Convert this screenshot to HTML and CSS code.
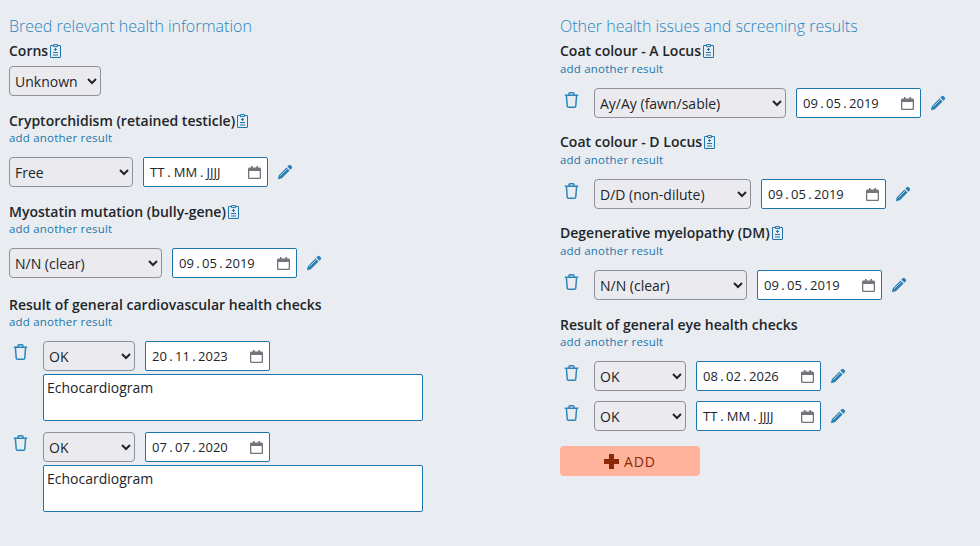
FILE: index.html
```html
<!DOCTYPE html>
<html lang="en">
<head>
<meta charset="utf-8">
<title>Health information</title>
<link rel="stylesheet" href="styles.css">
</head>
<body>
<svg class="defs" width="0" height="0" aria-hidden="true">
  <symbol id="clip" viewBox="0 0 11 14"><path d="M3.500 1.500H.9a.4.4 0 0 0-.4.4v11.200c0 .2.200.4.400.4h9.200c.2 0 .4-.2.4-.4V1.900a.4.4 0 0 0-.4-.4H7.500M3.500.6h4v2h-4zM5.500 4v3M4 5.500h3M3 8.500h5M3 11h5" fill="none" stroke="currentColor" stroke-width="1"/></symbol>
  <symbol id="cal" viewBox="0 0 13 13"><path d="M3 0h1.600v1.500h3.800V0H10v1.500h1.400c.9 0 1.600.7 1.600 1.600v8.300c0 .9-.7 1.600-1.600 1.600H1.600C.7 13 0 12.300 0 11.400V3.100C0 2.200.7 1.500 1.600 1.500H3zM1.300 5v6.400c0 .2.100.3.300.3h9.800c.2 0 .3-.1.300-.3V5z" fill="currentColor"/></symbol>
  <symbol id="pen" viewBox="0 0 16 16"><path d="M11.600 1.300a1.500 1.500 0 0 1 2.100 0l1 1a1.500 1.500 0 0 1 0 2.100l-1.300 1.300-3.100-3.100zM9.500 3.400l3.100 3.100-7.800 7.800-3.900.9.900-4z" fill="currentColor"/><path d="M3.200 11.800l7.300-7.300" stroke="#e9edf1" stroke-width=".7"/></symbol>
  <symbol id="bin" viewBox="0 0 14 15"><path d="M.7 3.100h12.600M4.700 3V1.600c0-.5.400-.9.900-.9h2.800c.5 0 .9.400.9.900V3M2.200 3.100l.8 10c0 .7.500 1.200 1.200 1.200h5.600c.7 0 1.200-.5 1.200-1.200l.8-10" fill="none" stroke="currentColor" stroke-width="1.400"/></symbol>
</svg>
<main class="page">
  <section class="col col-left">
    <h2 class="heading">Breed relevant health information</h2>
    <div class="group">
      <h3 class="label">Corns<svg class="clip"><use href="#clip"/></svg></h3>
      <div class="row row-first">
        <select class="sel w-92"><option>Unknown</option></select>
      </div>
    </div>
    <div class="group">
      <h3 class="label">Cryptorchidism (retained testicle)<svg class="clip"><use href="#clip"/></svg></h3>
      <a class="link" href="#">add another result</a>
      <div class="row">
        <select class="sel w-124"><option>Free</option></select>
        <div class="date empty"><span>TT . MM . JJJJ</span><svg class="cal"><use href="#cal"/></svg></div>
        <svg class="pen"><use href="#pen"/></svg>
      </div>
    </div>
    <div class="group">
      <h3 class="label">Myostatin mutation (bully-gene)<svg class="clip"><use href="#clip"/></svg></h3>
      <a class="link" href="#">add another result</a>
      <div class="row">
        <select class="sel w-153"><option>N/N (clear)</option></select>
        <div class="date"><span>09 . 05 . 2019</span><svg class="cal"><use href="#cal"/></svg></div>
        <svg class="pen"><use href="#pen"/></svg>
      </div>
    </div>
    <div class="group group-wide">
      <h3 class="label">Result of general cardiovascular health checks</h3>
      <a class="link" href="#">add another result</a>
      <div class="entry">
        <svg class="bin"><use href="#bin"/></svg>
        <div class="entry-body">
          <div class="row-tight">
            <select class="sel w-92"><option>OK</option></select>
            <div class="date"><span>20 . 11 . 2023</span><svg class="cal"><use href="#cal"/></svg></div>
          </div>
          <textarea class="note">Echocardiogram</textarea>
        </div>
      </div>
      <div class="entry">
        <svg class="bin"><use href="#bin"/></svg>
        <div class="entry-body">
          <div class="row-tight">
            <select class="sel w-92"><option>OK</option></select>
            <div class="date"><span>07 . 07 . 2020</span><svg class="cal"><use href="#cal"/></svg></div>
          </div>
          <textarea class="note">Echocardiogram</textarea>
        </div>
      </div>
    </div>
  </section>
  <section class="col">
    <h2 class="heading">Other health issues and screening results</h2>
    <div class="group">
      <h3 class="label">Coat colour - A Locus<svg class="clip"><use href="#clip"/></svg></h3>
      <a class="link" href="#">add another result</a>
      <div class="row">
        <svg class="bin"><use href="#bin"/></svg>
        <select class="sel w-192"><option>Ay/Ay (fawn/sable)</option></select>
        <div class="date"><span>09 . 05 . 2019</span><svg class="cal"><use href="#cal"/></svg></div>
        <svg class="pen"><use href="#pen"/></svg>
      </div>
    </div>
    <div class="group">
      <h3 class="label">Coat colour - D Locus<svg class="clip"><use href="#clip"/></svg></h3>
      <a class="link" href="#">add another result</a>
      <div class="row">
        <svg class="bin"><use href="#bin"/></svg>
        <select class="sel w-157"><option>D/D (non-dilute)</option></select>
        <div class="date"><span>09 . 05 . 2019</span><svg class="cal"><use href="#cal"/></svg></div>
        <svg class="pen"><use href="#pen"/></svg>
      </div>
    </div>
    <div class="group">
      <h3 class="label">Degenerative myelopathy (DM)<svg class="clip"><use href="#clip"/></svg></h3>
      <a class="link" href="#">add another result</a>
      <div class="row">
        <svg class="bin"><use href="#bin"/></svg>
        <select class="sel w-153"><option>N/N (clear)</option></select>
        <div class="date"><span>09 . 05 . 2019</span><svg class="cal"><use href="#cal"/></svg></div>
        <svg class="pen"><use href="#pen"/></svg>
      </div>
    </div>
    <div class="group group-last">
      <h3 class="label">Result of general eye health checks</h3>
      <a class="link link-tight" href="#">add another result</a>
      <div class="row">
        <svg class="bin"><use href="#bin"/></svg>
        <select class="sel w-92"><option>OK</option></select>
        <div class="date"><span>08 . 02 . 2026</span><svg class="cal"><use href="#cal"/></svg></div>
        <svg class="pen"><use href="#pen"/></svg>
      </div>
      <div class="row row-next">
        <svg class="bin"><use href="#bin"/></svg>
        <select class="sel w-92"><option>OK</option></select>
        <div class="date empty"><span>TT . MM . JJJJ</span><svg class="cal"><use href="#cal"/></svg></div>
        <svg class="pen"><use href="#pen"/></svg>
      </div>
    </div>
    <button class="add" type="button"><span class="plus"></span>ADD</button>
  </section>
</main>
</body>
</html>
```

FILE: styles.css
```css
* { box-sizing: border-box; }
html, body { margin: 0; height: 100%; }
body {
  background: #e9edf1;
  color: #212529;
  font-family: "Open Sans", sans-serif;
  font-size: 14px;
  overflow: hidden;
}
.defs { position: absolute; }
.page {
  display: grid;
  grid-template-columns: 551px 1fr;
  padding: 15px 0 0 9px;
}
.heading {
  margin: 0;
  font-size: 16px;
  line-height: 22px;
  font-weight: 300;
  color: #2a85c0;
}
.group { margin-top: 6px; }
.group + .group { margin-top: 16px; }
.col-left .group + .group { margin-top: 17px; }
.col-left .group + .group-wide { margin-top: 19px; }
.col .group + .group-last { margin-top: 17px; }
.label {
  margin: 0;
  font-size: 14px;
  line-height: 16px;
  font-weight: 600;
  color: #212529;
  display: flex;
  align-items: center;
}
.clip { width: 11px; height: 14px; margin-left: 2px; color: #1d75ad; }
.link {
  display: block;
  font-size: 11.5px;
  line-height: 16px;
  margin-top: 2px;
  letter-spacing: .2px;
  color: #1d75ad;
  text-decoration: none;
}
.col-left .link { margin-top: 1px; }
.col .link-tight { margin-top: 1px; }
.row, .row-tight { display: flex; align-items: center; }
.row { margin-top: 11px; }
.row-first { margin-top: 7px; }
.row-next { margin-top: 10px; }
.sel {
  height: 30px;
  font-family: "Open Sans", sans-serif;
  font-size: 14px;
  color: #212529;
  background-color: #ebebef;
  border: 1px solid #8f8f9d;
  border-radius: 4px;
  padding: 0 0 0 1px;
}
.w-92 { width: 92px; }
.w-124 { width: 124px; }
.w-153 { width: 153px; }
.w-157 { width: 157px; }
.w-192 { width: 192px; }
.date {
  width: 125px;
  height: 30px;
  margin-left: 10px;
  padding: 0 6px 0 6px;
  background: #fff;
  border: 1px solid #1d75ad;
  border-radius: 2px;
  display: flex;
  align-items: center;
  justify-content: space-between;
  font-size: 13px;
  white-space: pre;
}
.date span { word-spacing: -1px; }
.date.empty span { word-spacing: -.4px; }
.cal { width: 13px; height: 13px; color: #73757a; flex: none; }
.pen { width: 16px; height: 16px; margin-left: 9px; color: #2b7fb3; flex: none; }
.bin { width: 15px; height: 16px; margin: -6px 15px 0 4px; color: #2b85bb; flex: none; }
.entry { display: flex; margin-top: 11px; align-items: flex-start; }
.entry + .entry { margin-top: 11px; }
.entry > .bin { margin-top: 3px; }
.entry-body { display: flex; flex-direction: column; }
.note {
  display: block;
  width: 380px;
  height: 47px;
  margin-top: 3px;
  padding: 3px;
  resize: none;
  background: #fff;
  border: 1px solid #1d75ad;
  border-radius: 2px;
  font-family: "Open Sans", sans-serif;
  font-size: 14px;
  line-height: 19px;
  color: #212529;
}
.add {
  display: flex;
  align-items: center;
  justify-content: center;
  width: 140px;
  height: 30px;
  margin-top: 15px;
  border: 0;
  border-radius: 4px;
  background: #ffb29c;
  color: #8a2a08;
  font-family: "Open Sans", sans-serif;
  font-size: 14px;
  letter-spacing: .9px;
}
.plus {
  width: 15px;
  height: 15px;
  margin-right: 5px;
  background:
    linear-gradient(#8a2a08, #8a2a08) center / 15px 5px no-repeat,
    linear-gradient(#8a2a08, #8a2a08) center / 5px 15px no-repeat;
}
```
